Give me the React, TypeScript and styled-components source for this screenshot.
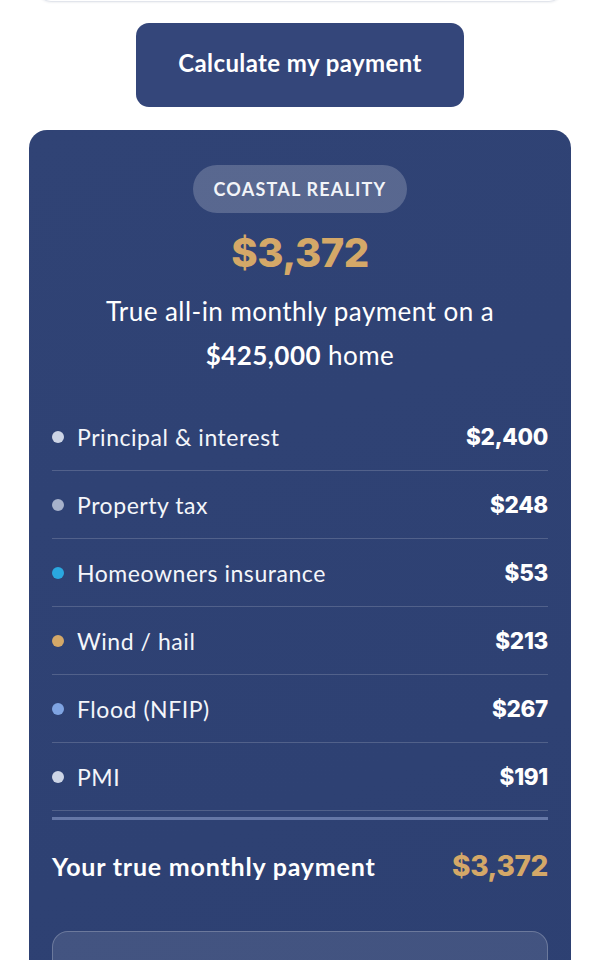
import React from "react";
import styled, { createGlobalStyle } from "styled-components";

const Global = createGlobalStyle`
  html, body { margin: 0; padding: 0; background: #ffffff; }
  body { font-family: "Lato", "Noto Sans", sans-serif; -webkit-font-smoothing: antialiased; }
  * { box-sizing: border-box; }
`;

const Page = styled.div`
  width: 600px;
  height: 960px;
  overflow: hidden;
  padding: 0 29px;
  display: flex;
  flex-direction: column;
  align-items: center;
`;

const FieldEdge = styled.div`
  width: 526px;
  height: 50px;
  margin-top: -48px;
  flex-shrink: 0;
  border: 1px solid #e2e5ec;
  border-radius: 14px;
  background: #ffffff;
  box-shadow: 0 1px 2px rgba(20, 30, 60, 0.06);
`;

const CalcButton = styled.button`
  margin-top: 21px;
  width: 328px;
  height: 84px;
  flex-shrink: 0;
  border: none;
  border-radius: 13px;
  padding: 0 0 5px;
  background: #34467a;
  color: #ffffff;
  font-family: "Lato", sans-serif;
  font-weight: 700;
  font-size: 24px;
  letter-spacing: 0.4px;
  cursor: pointer;
`;

const Card = styled.section`
  margin-top: 23px;
  width: 542px;
  flex-shrink: 0;
  border-radius: 18px;
  background: linear-gradient(160deg, #304375 0%, #2d4072 100%);
  padding: 35px 23px 40px;
  display: flex;
  flex-direction: column;
  align-items: center;
  color: #ffffff;
`;

const Badge = styled.div`
  height: 48px;
  padding: 0 21px;
  border-radius: 24px;
  background: rgba(255, 255, 255, 0.2);
  display: flex;
  align-items: center;
  font-size: 18px;
  font-weight: 700;
  letter-spacing: 1.2px;
  color: #f2f4f8;
`;

const BigAmount = styled.div`
  margin-top: 14px;
  font-family: "Inter", sans-serif;
  font-weight: 800;
  font-size: 40px;
  line-height: 52px;
  letter-spacing: -0.5px;
  color: #d4a868;
`;

const Subtitle = styled.p`
  margin: 10px 0 0;
  text-align: center;
  font-size: 26px;
  letter-spacing: 0.45px;
  line-height: 44px;
  color: #ffffff;
  strong { font-weight: 700; }
`;

const List = styled.ul`
  list-style: none;
  margin: 26px 0 0;
  padding: 0;
  width: 100%;
  display: flex;
  flex-direction: column;
`;

const Row = styled.li`
  height: 68px;
  display: flex;
  align-items: center;
  border-bottom: 1px solid rgba(255, 255, 255, 0.17);
`;

const Dot = styled.span<{ $color: string }>`
  width: 12px;
  height: 12px;
  border-radius: 50%;
  background: ${(p) => p.$color};
  margin-right: 13px;
  flex-shrink: 0;
`;

const Label = styled.span`
  flex: 1;
  font-size: 23px;
  letter-spacing: 0.55px;
  color: #f4f6fa;
`;

const Value = styled.span`
  font-family: "Inter", sans-serif;
  font-weight: 800;
  font-size: 22.5px;
  letter-spacing: -0.3px;
  color: #ffffff;
`;

const ThickRule = styled.div`
  width: 100%;
  height: 3px;
  margin-top: 6px;
  background: #6577a6;
`;

const TotalRow = styled.div`
  width: 100%;
  height: 92px;
  display: flex;
  align-items: center;
  justify-content: space-between;
`;

const TotalLabel = styled.span`
  font-size: 25px;
  font-weight: 700;
  letter-spacing: 0.8px;
  color: #ffffff;
`;

const TotalValue = styled.span`
  font-family: "Inter", sans-serif;
  font-weight: 800;
  font-size: 28px;
  letter-spacing: -0.4px;
  color: #d4a868;
`;

const InfoBox = styled.div`
  margin-top: 19px;
  width: 100%;
  height: 120px;
  border-radius: 16px;
  background: rgba(255, 255, 255, 0.1);
  border: 1px solid rgba(255, 255, 255, 0.22);
`;

const rows = [
  { label: "Principal & interest", value: "$2,400", color: "#cdd5e6" },
  { label: "Property tax", value: "$248", color: "#a7b2cb" },
  { label: "Homeowners insurance", value: "$53", color: "#2aa8e0" },
  { label: "Wind / hail", value: "$213", color: "#d4a868" },
  { label: "Flood (NFIP)", value: "$267", color: "#7fa4e2" },
  { label: "PMI", value: "$191", color: "#cdd5e6" },
];

export default function App() {
  return (
    <>
      <Global />
      <Page>
        <FieldEdge />
        <CalcButton>Calculate my payment</CalcButton>
        <Card>
          <Badge>COASTAL REALITY</Badge>
          <BigAmount>$3,372</BigAmount>
          <Subtitle>
            True all-in monthly payment on a
            <br />
            <strong>$425,000</strong> home
          </Subtitle>
          <List>
            {rows.map((r) => (
              <Row key={r.label}>
                <Dot $color={r.color} />
                <Label>{r.label}</Label>
                <Value>{r.value}</Value>
              </Row>
            ))}
          </List>
          <ThickRule />
          <TotalRow>
            <TotalLabel>Your true monthly payment</TotalLabel>
            <TotalValue>$3,372</TotalValue>
          </TotalRow>
          <InfoBox />
        </Card>
      </Page>
    </>
  );
}
